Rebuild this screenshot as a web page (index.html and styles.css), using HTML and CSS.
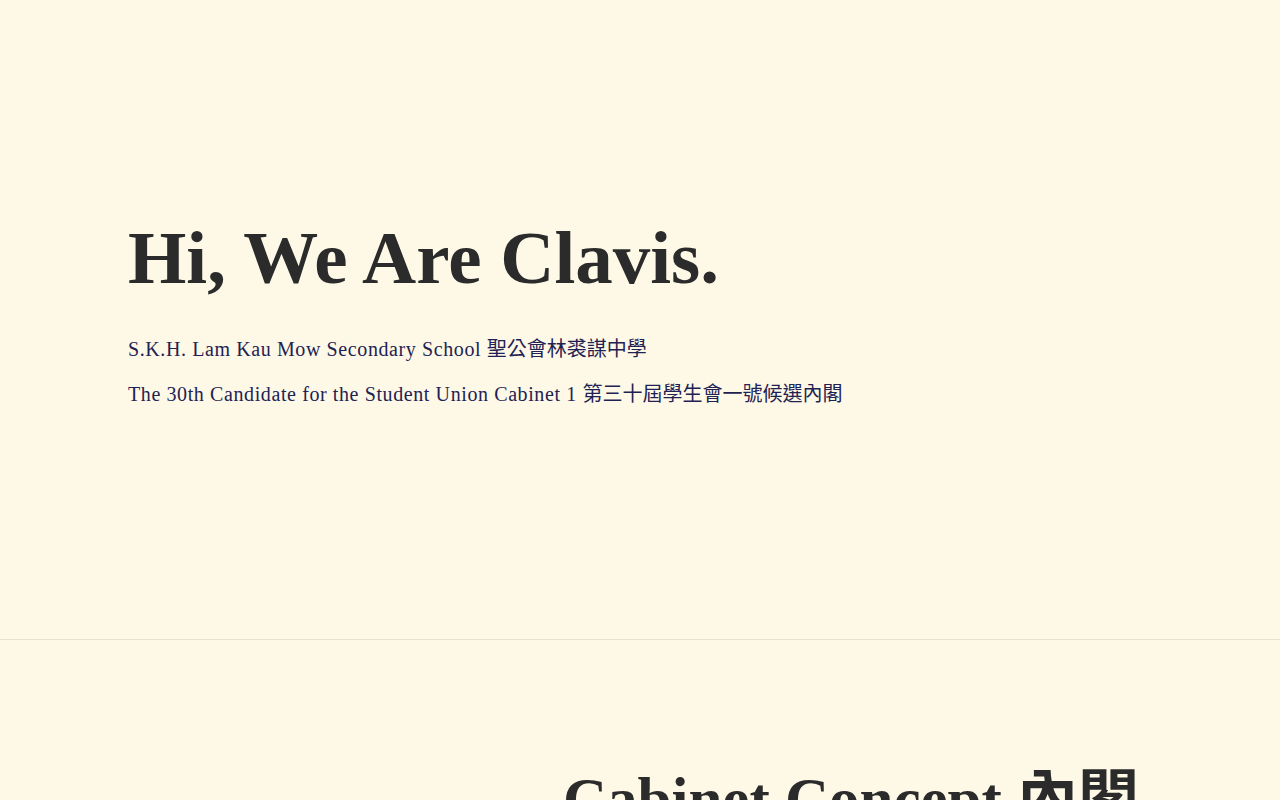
FILE: index.html
```html
<!DOCTYPE html>
<html lang="en">
<head>
<meta charset="utf-8">
<title>Clavis</title>
<link rel="stylesheet" href="styles.css">
</head>
<body>
<section class="hero">
  <div class="container">
    <h1 class="hero-title">Hi, We Are Clavis.</h1>
    <p class="hero-line">S.K.H. Lam Kau Mow Secondary School <span class="zh">聖公會林裘謀中學</span></p>
    <p class="hero-line">The 30th Candidate for the Student Union Cabinet 1 <span class="zh">第三十屆學生會一號候選內閣</span></p>
  </div>
</section>
<section class="concept">
  <div class="container concept-grid">
    <div class="concept-side"></div>
    <div class="concept-main">
      <h2 class="concept-title">Cabinet Concept 內閣</h2>
    </div>
  </div>
</section>
</body>
</html>
```
FILE: styles.css
```css
html, body {
  margin: 0;
  padding: 0;
  background: #fef9e7;
}
body {
  font-family: "Liberation Serif", "Noto Sans CJK TC", serif;
  color: #2b2b2b;
}
.container {
  padding: 0 128px;
}
.hero {
  height: 639px;
  border-bottom: 1px solid #e6e2d0;
  display: flex;
  align-items: center;
}
.hero .container {
  margin-top: -5px;
}
.hero-title {
  margin: 0 0 28px;
  font-size: 75px;
  line-height: 1.1;
  font-weight: 700;
  color: #2b2b2b;
}
.hero-line {
  margin: 0;
  font-size: 20px;
  line-height: 45px;
  letter-spacing: 0.6px;
  color: #1f2253;
}
.zh {
  letter-spacing: 0;
}
.concept {
  padding-top: 123px;
}
.concept-grid {
  display: grid;
  grid-template-columns: 435px 1fr;
}
.concept-title {
  margin: 0;
  font-size: 61px;
  line-height: 1.2;
  font-weight: 700;
  color: #2b2b2b;
  white-space: nowrap;
}
```
